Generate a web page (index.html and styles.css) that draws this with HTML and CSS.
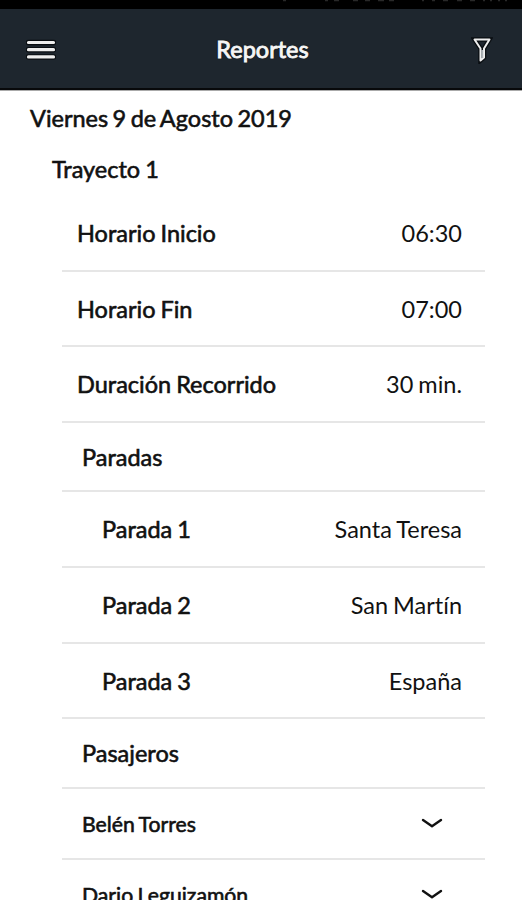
FILE: index.html
```html
<!DOCTYPE html>
<html lang="es">
<head>
<meta charset="utf-8">
<title>Reportes</title>
<link rel="stylesheet" href="styles.css">
</head>
<body>
<div class="status">
<svg width="240" height="3" viewBox="0 0 240 3"><path d="M2 0.500h3M44 0.500h3M53 0.500h5M72 0.500h5M84 0.500h5M97 0.500h6M108 0.500h5M141 0.500h2M151 0.500h3M162 0.500h5M176 0.500h5M189 0.500h5M202 0.500h2M209 0.500h2M217 0.500h2M224 0.500h2"/></svg>
</div>
<header class="bar">
<svg class="menu" width="30" height="22" viewBox="0 0 30 22"><path class="edge" d="M2.500 3.500h25M2.500 10.700h25M2.500 17.900h25"/><path class="ink" d="M2.500 3.500h25M2.500 10.700h25M2.500 17.900h25"/></svg>
<h1 class="title">Reportes</h1>
<svg class="filter" width="22" height="28" viewBox="0 0 22 28"><path class="edge" d="M3.500 3.500h15l-5.500 9v9l-3.500 3v-12z"/><path class="ink" d="M3.500 3.500h15l-5.500 9v9l-3.500 3v-12z"/><path class="shade" d="M11.200 14v8"/></svg>
</header>
<main>
<h2 class="date">Viernes 9 de Agosto 2019</h2>
<h3 class="trip">Trayecto 1</h3>
<div class="list">
<div class="row"><span class="label">Horario Inicio</span><span class="value">06:30</span></div>
<div class="row short"><span class="label">Horario Fin</span><span class="value">07:00</span></div>
<div class="row"><span class="label">Duración Recorrido</span><span class="value">30 min.</span></div>
<div class="row section"><span class="label">Paradas</span></div>
<div class="row stop"><span class="label">Parada 1</span><span class="value">Santa Teresa</span></div>
<div class="row stop"><span class="label">Parada 2</span><span class="value">San Martín</span></div>
<div class="row stop short"><span class="label">Parada 3</span><span class="value">España</span></div>
<div class="row section tall"><span class="label">Pasajeros</span></div>
<div class="row person"><span class="label">Belén Torres</span><svg width="22" height="12" viewBox="0 0 22 12"><path d="M2 2l9 6.200l9-6.200"/></svg></div>
<div class="row person"><span class="label">Dario Leguizamón</span><svg width="22" height="12" viewBox="0 0 22 12"><path d="M2 2l9 6.200l9-6.200"/></svg></div>
</div>
</main>
</body>
</html>
```

FILE: styles.css
```css
* { box-sizing: border-box; }
html, body { height: 900px; overflow: hidden; }
body { margin: 0; background: #fff; color: #111; font-family: Lato, "Liberation Sans", sans-serif; font-variant-ligatures: none; }
h1, h2, h3 { margin: 0; font-weight: 400; white-space: nowrap; }
svg { display: block; flex: none; fill: none; }
.status { height: 9px; background: #000; padding-left: 281px; }
.status path { stroke: #292929; stroke-width: 1.5; }
.bar { height: 81px; background: #1e262e; border-bottom: 2px solid #08090b; display: grid; grid-template-columns: 100px 1fr 100px; align-items: center; box-shadow: 0 1px 0 #aaa; }
.menu { margin: 3px 0 0 26px; }
.edge { stroke: #0a0e12; stroke-width: 5.5; stroke-linecap: round; }
.ink { stroke: #eee; stroke-width: 3.2; stroke-linecap: round; }
.filter { justify-self: end; margin: 3px 29px 0 0; }
.filter .edge { stroke-width: 4.5; }
.filter .ink { stroke-width: 2; stroke-linejoin: round; }
.shade { stroke: #aeb4b8; stroke-width: 2; }
.title { padding: 1px 0 0 3px; color: #f6f6f6; font-size: 23.5px; line-height: 28px; text-align: center; -webkit-text-stroke: 0.9px #f6f6f6; text-shadow: 0 0 2px #000; }
.date, .trip, .label { -webkit-text-stroke: 0.6px #111; }
.date { margin: 14px 0 0 30px; font-size: 23.5px; line-height: 28px; word-spacing: -1.6px; }
.trip { margin: 23px 0 0 52px; font-size: 23.5px; line-height: 28px; word-spacing: -1px; }
.list { width: 423px; margin: 13px 0 0 62px; }
.row { height: 76px; border-bottom: 2px solid #e6e6e6; display: flex; align-items: center; justify-content: space-between; padding: 0 23px 0 15px; font-size: 23.5px; line-height: 28px; word-spacing: -1px; white-space: nowrap; }
.short { height: 75px; }
.section { height: 69px; padding-left: 20px; }
.tall { height: 70px; }
.stop { padding-left: 40px; }
.person { height: 71px; padding: 0 42px 0 20px; font-size: 21.2px; }
.person path { stroke: #111; stroke-width: 2.4; stroke-linecap: round; stroke-linejoin: round; }
```
